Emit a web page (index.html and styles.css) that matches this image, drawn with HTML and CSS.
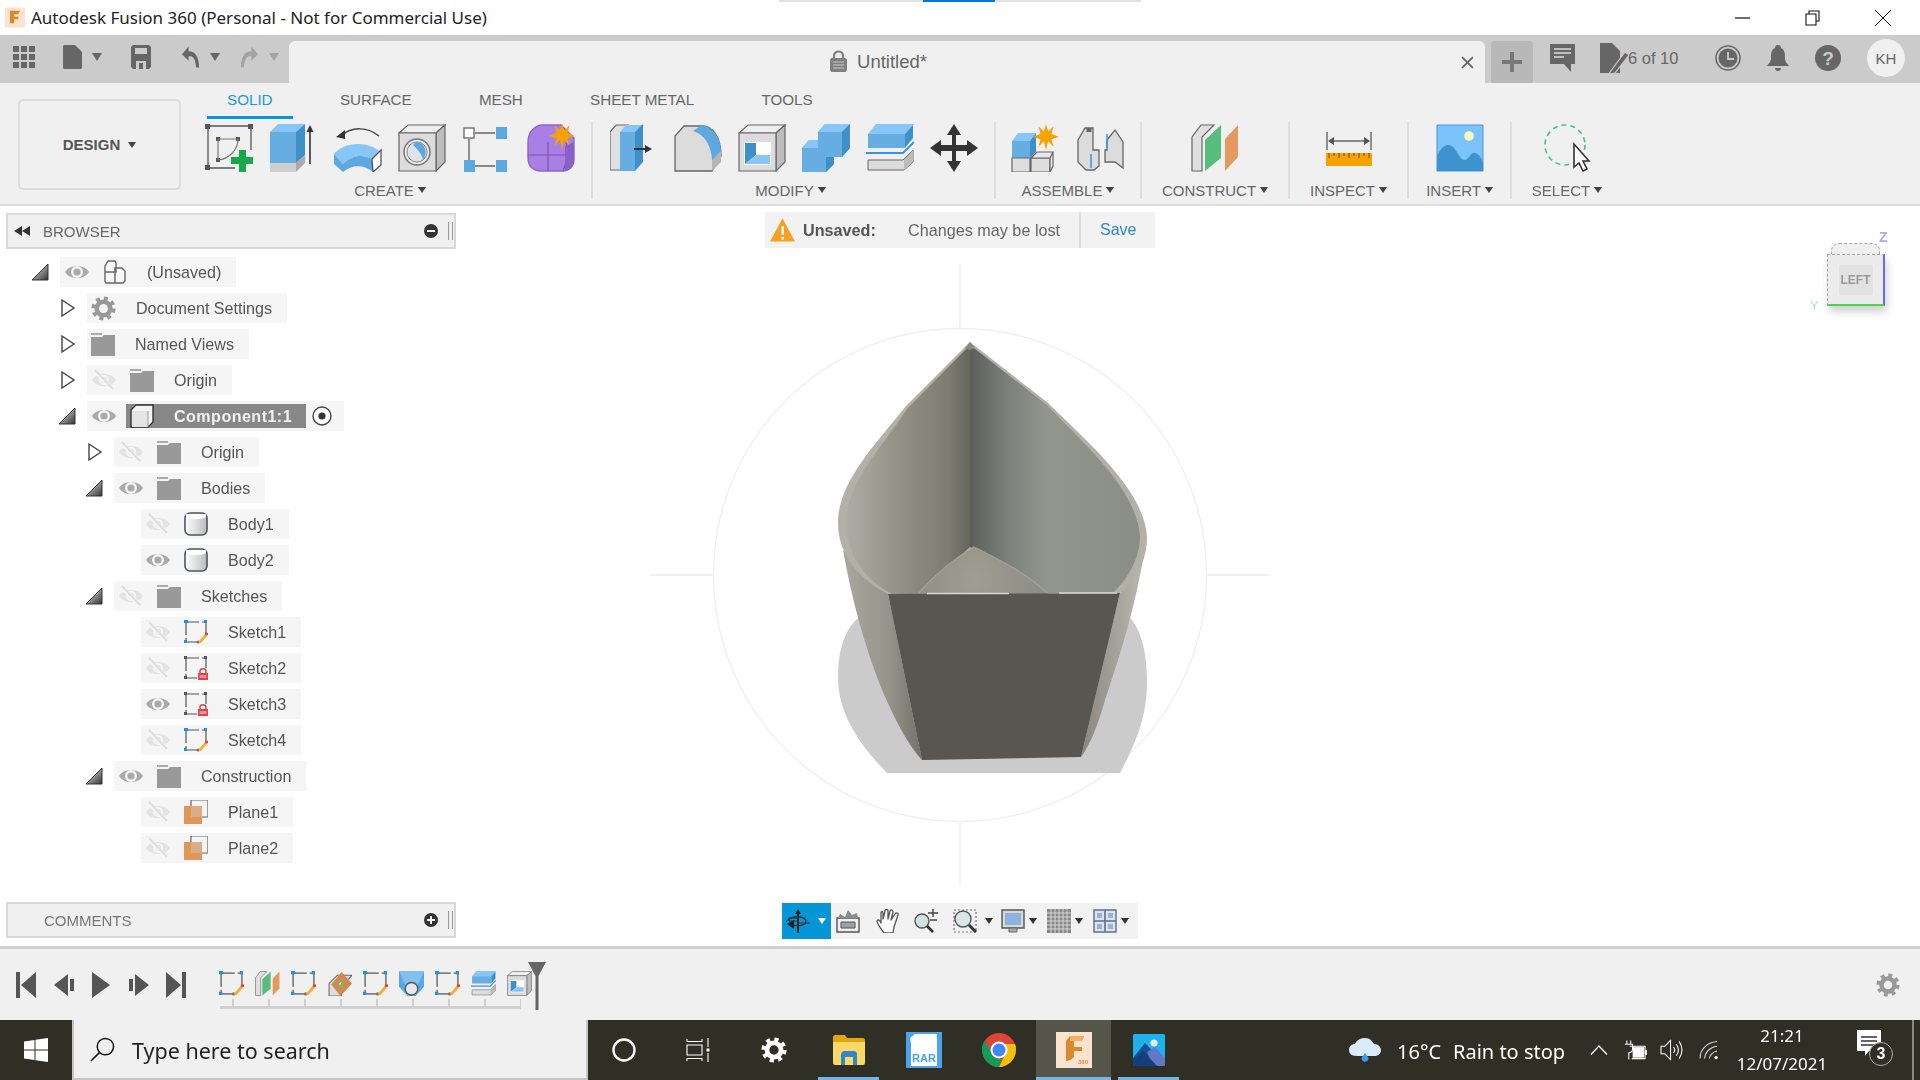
FILE: index.html
```html
<!DOCTYPE html>
<html lang="en">
<head>
<meta charset="utf-8">
<title>Autodesk Fusion 360</title>
<link rel="stylesheet" href="styles.css">
</head>
<body>
<svg class="defs" width="0" height="0" aria-hidden="true">
  <defs>
    <linearGradient id="gTri" x1="0" y1="0" x2="1" y2="1"><stop offset="0" stop-color="#f4f4f4"/><stop offset="1" stop-color="#333"/></linearGradient>
    <linearGradient id="gBody" x1="0" y1="0" x2="1" y2="0"><stop offset="0" stop-color="#fff"/><stop offset="1" stop-color="#bbb"/></linearGradient>
    <linearGradient id="wallL" x1="848" y1="0" x2="970" y2="0" gradientUnits="userSpaceOnUse"><stop offset="0" stop-color="#adaca4"/><stop offset=".45" stop-color="#918f83"/><stop offset=".82" stop-color="#7f7d72"/><stop offset="1" stop-color="#66655c"/></linearGradient>
    <linearGradient id="wallR" x1="970" y1="0" x2="1140" y2="0" gradientUnits="userSpaceOnUse"><stop offset="0" stop-color="#5b5f5a"/><stop offset=".22" stop-color="#7b807a"/><stop offset=".45" stop-color="#92968e"/><stop offset="1" stop-color="#8b8e85"/></linearGradient>
    <linearGradient id="sideL" x1="843" y1="0" x2="920" y2="0" gradientUnits="userSpaceOnUse"><stop offset="0" stop-color="#a9a89e"/><stop offset=".6" stop-color="#96948a"/><stop offset="1" stop-color="#75736a"/></linearGradient>
    <linearGradient id="sideR" x1="1085" y1="0" x2="1142" y2="0" gradientUnits="userSpaceOnUse"><stop offset="0" stop-color="#8c8a80"/><stop offset="1" stop-color="#bab8ae"/></linearGradient>
    <radialGradient id="floorG" cx="974" cy="580" r="60" gradientUnits="userSpaceOnUse"><stop offset="0" stop-color="#a09e92"/><stop offset="1" stop-color="#8e8f86"/></radialGradient>
    <symbol id="s-gear" viewBox="0 0 24 24"><circle cx="12" cy="12" r="6.5" fill="none" stroke="currentColor" stroke-width="4.4"/><circle cx="12" cy="12" r="9.8" fill="none" stroke="currentColor" stroke-width="3.6" stroke-dasharray="3.85 3.85"/></symbol>
    <symbol id="s-eye" viewBox="0 0 24 24"><path d="M0 12C5 4 19 4 24 12C19 20 5 20 0 12Z" fill="currentColor"/><circle cx="12" cy="12" r="6" fill="#f5f5f5"/><circle cx="12" cy="12" r="3.6" fill="currentColor"/></symbol>
    <symbol id="s-off" viewBox="0 0 24 24"><path d="M0 12C5 4 19 4 24 12C19 20 5 20 0 12Z" fill="#e3e3e3"/><circle cx="12" cy="12" r="5" fill="#f5f5f5"/><circle cx="12" cy="12" r="3" fill="#e3e3e3"/><path d="M3 3L21 22" stroke="#f5f5f5" stroke-width="4"/><path d="M3 2L21 21" stroke="#dedede" stroke-width="2"/></symbol>
    <symbol id="s-folder" viewBox="0 0 24 24"><path d="M0 1h11v2H0z" fill="#aaa"/><path d="M0 5h11l2-2h11v21H0z" fill="#999"/></symbol>
    <symbol id="s-doc-cubes" viewBox="0 0 24 24"><path d="M2 6l3-5h7l1 2v9h-11z M2 12h10v11H3l-1-2z M12 12V8h7l3 3v10l-2 2h-8z" fill="#f8f8f8" stroke="#666" stroke-width="1.4"/></symbol>
    <symbol id="s-cube" viewBox="0 0 24 24"><path d="M1 6l5-5h17v17l-5 5H1z" fill="#f4f4f4" stroke="#333" stroke-width="1.4"/><path d="M2 7h16v16H2z" fill="#e4e4e4"/><path d="M18 7V23" stroke="#999"/></symbol>
    <symbol id="s-body" viewBox="0 0 24 24"><rect x="1" y="1" width="22" height="22" rx="5" fill="url(#gBody)" stroke="#4e5560" stroke-width="1.6"/><path d="M2 5C7 8 17 8 22 5V2H2z" fill="#fff"/></symbol>
    <symbol id="s-skpen" viewBox="0 0 24 24"><path d="M2 2H22M2 2V22M2 22H14M22 2V13" fill="none" stroke="#555" stroke-width="1.2" stroke-dasharray="13 3"/><path d="M0 0h4v3H0zM20 0h3v3h-3zM0 20h3v3H0z" fill="#1e90e8"/><circle cx="14" cy="22" r="1.6" fill="#777"/><path d="M15 21l6-7 2 2-6 7h-2z" fill="#f0b030"/><circle cx="22.5" cy="14" r="1.6" fill="#e34040"/></symbol>
    <symbol id="s-sklock" viewBox="0 0 24 24"><path d="M2 2H22M2 2V22M2 22H13M22 2V12" fill="none" stroke="#555" stroke-width="1.2" stroke-dasharray="13 3"/><path d="M0 0h3v3H0zM20 0h3v3h-3zM0 20h3v3H0z" fill="#555"/><path d="M14 17h10v7H14z" fill="#d84848"/><path d="M16 17v-2c0-3 6-3 6 0v2" fill="none" stroke="#d84848" stroke-width="1.5"/><path d="M15.5 19h7v3h-7z" fill="#e59090"/></symbol>
    <symbol id="s-plane" viewBox="0 0 24 24"><path d="M7 6V0h17v17h-6" fill="none" stroke="#666" stroke-width="1.2"/><path d="M0 6h18v18H0z" fill="#e09656"/><path d="M7 6h11v11H7z" fill="#d9ac8a"/></symbol>
    <symbol id="s-sketchnew" viewBox="0 0 48 48"><path d="M3 2H46M3 2V44M3 44H30M46 2V26" fill="none" stroke="#555" stroke-width="1.3"/><path d="M0 0h5v5H0zM43 0h5v5h-5zM0 41h5v5H0zM11 13h4v4h-4zM31 13h4v4h-4zM11 34h4v4h-4z" fill="#555"/><path d="M13 15H33M13 15V36M33 15C33 26 24 35 13 36" fill="none" stroke="#777" stroke-width="1.2"/><path d="M34 32h7v7h8v7h-8v8h-7v-8h-8v-7h8z" fill="#17a849" transform="translate(0 -6)"/></symbol>
    <symbol id="s-extrude" viewBox="0 0 48 48"><path d="M1 8L9 0H36L27 8Z" fill="#88c6f9"/><path d="M1 8H27V39H1Z" fill="#66ade2"/><path d="M27 8L36 0V31L27 39Z" fill="#3f8fc8"/><path d="M1 39H27V48H1Z" fill="#cfcfcf"/><path d="M27 39L36 31V39L27 48Z" fill="#aaa"/><path d="M41 40V6" stroke="#333" stroke-width="1.6"/><path d="M37.5 8L41 1L44.5 8Z" fill="#333"/></symbol>
    <symbol id="s-sweep" viewBox="0 0 48 48"><path d="M7 12C18 2 34 3 45 12" fill="none" stroke="#444" stroke-width="1.5"/><path d="M2 13L11 6L11 15Z" fill="#333"/><path d="M0 30C10 18 32 16 47 28L38 35C28 30 18 31 9 40Z" fill="#88c6f9"/><path d="M0 30L9 40C18 31 28 30 38 35L39 48C28 40 18 41 9 48L0 40Z" fill="#5ea8e0"/><path d="M38 35L47 26V41L39 48Z" fill="#fff" stroke="#555" stroke-width="1.3"/></symbol>
    <symbol id="s-hole" viewBox="0 0 48 48"><path d="M1 9L10 1H47L38 9Z" fill="#efefef" stroke="#666" stroke-width="1.2"/><path d="M38 9L47 1V38L38 47Z" fill="#bdbdbd" stroke="#666" stroke-width="1.2"/><path d="M1 9H38V47H1Z" fill="#dcdcdc" stroke="#666" stroke-width="1.2"/><circle cx="19" cy="28" r="13" fill="#e8e8e8" stroke="#777" stroke-width="1.5"/><circle cx="19" cy="28" r="10" fill="#dfe4e8" stroke="#888"/><path d="M18 18C28 18 30 30 25 36C24 30 20 26 15 21Z" fill="#5ea8e0"/></symbol>
    <symbol id="s-pattern" viewBox="2 0 48 48"><path d="M14 9H34M8 15V36M14 42H34" stroke="#666" stroke-width="1.4"/><rect x="3" y="4" width="10" height="10" fill="#fff" stroke="#666" stroke-width="1.3"/><path d="M35 3h11v12H35zM3 36h11v12H3zM35 36h11v12H35z" fill="#5ea8e0"/></symbol>
    <symbol id="s-star" viewBox="0 0 24 24"><path d="M12 0l2 7 5-5-2 7 7 3-7 2 2 7-5-5-2 8-2-8-5 5 2-7-7-2 7-3-2-7 5 5z" fill="#f6a300"/></symbol>
    <symbol id="s-form" viewBox="0 0 48 48"><path d="M1 18C1 8 8 1 16 1H34L47 14V36C47 42 42 47 36 47H14C6 47 1 42 1 34Z" fill="#a97fe6" stroke="#8d65c8" stroke-width="1.4"/><path d="M1 31H40M21 18V47M39 18C42 26 40 38 36 47" fill="none" stroke="#7a54b5" stroke-width="1.2"/><path d="M38 22V47C42 46 47 42 47 36V18Z" fill="#8a60c8"/><use href="#s-star" x="22" y="-1" width="26" height="26"/></symbol>
    <symbol id="s-press" viewBox="6 0 48 48"><path d="M5 46H13V8L18 1H6L0 8V46Z" fill="#e0e0e0" stroke="#666" stroke-width="1.2" transform="translate(6 0)"/><path d="M16 8L22 1H40L34 8Z" fill="#88c6f9"/><path d="M16 8H31V47H16Z" fill="#66ade2"/><path d="M31 8L39 0V38L31 47Z" fill="#3f8fc8"/><path d="M30 25H42" stroke="#333" stroke-width="2"/><path d="M41 21L48 25L41 29Z" fill="#333"/></symbol>
    <symbol id="s-fillet" viewBox="0 0 48 48"><path d="M1 47V12L10 2H28C38 2 47 12 47 32L38 47Z" fill="#dcdcdc" stroke="#666" stroke-width="1.3"/><path d="M19 7L28 1C38 2 47 14 47 27L38 37C38 22 30 10 19 7Z" fill="#5ea8e0"/><path d="M38 37L47 27V38L38 47Z" fill="#b5b5b5"/></symbol>
    <symbol id="s-shell" viewBox="0 0 48 48"><path d="M1 9L10 1H47L38 9Z" fill="#efefef" stroke="#666" stroke-width="1.2"/><path d="M38 9L47 1V38L38 47Z" fill="#bdbdbd" stroke="#666" stroke-width="1.2"/><path d="M1 9H38V47H1Z" fill="#dcdcdc" stroke="#666" stroke-width="1.2"/><path d="M6 18H33V41H6Z" fill="#fff"/><path d="M7 19H18V31L7 40Z" fill="#3f8fc8"/><path d="M18 31H32V40H7Z" fill="#88c6f9"/></symbol>
    <symbol id="s-combine" viewBox="0 0 48 48"><path d="M16 8L23 0H48V24L40 33H32V40L24 48H0V24L7 16H16Z" fill="#66ade2"/><path d="M16 8L23 0H48L40 8Z" fill="#88c6f9"/><path d="M0 24L7 16H16V24Z" fill="#88c6f9"/><path d="M40 8L48 0V24L40 33Z" fill="#3f8fc8"/><path d="M24 33H32V40L24 48Z" fill="#3f8fc8"/></symbol>
    <symbol id="s-split" viewBox="0 0 48 48"><path d="M2 10L10 0H48L39 10Z" fill="#88c6f9"/><path d="M2 10H39V24H2Z" fill="#66ade2"/><path d="M39 10L47 1V14L39 24Z" fill="#3f8fc8"/><path d="M0 29H37L48 18" fill="none" stroke="#3a95e0" stroke-width="2"/><path d="M2 36H37L47 26V38L38 46H2Z" fill="#dcdcdc" stroke="#666" stroke-width="1"/><path d="M38 36L47 26V38L38 46Z" fill="#bbb"/></symbol>
    <symbol id="s-move" viewBox="0 0 48 48"><path d="M24 0L31 11H26V21H37V16L48 24L37 32V27H26V37H31L24 48L17 37H22V27H11V32L0 24L11 16V21H22V11H17Z" fill="#333"/></symbol>
    <symbol id="s-newcomp" viewBox="0 0 48 48"><path d="M1 17L7 9H25L19 17Z" fill="#88c6f9"/><path d="M1 17H19V34H1Z" fill="#66ade2"/><path d="M19 17L25 9V28L19 34Z" fill="#3f8fc8"/><path d="M1 34H19V48H1ZM20 34H39V48H20Z" fill="#dedede" stroke="#666" stroke-width="1.2"/><path d="M20 34L26 28H42L39 34ZM39 34L42 28V42L39 48Z" fill="#e8e8e8" stroke="#666" stroke-width="1.2"/><use href="#s-star" x="22" y="0" width="26" height="26"/></symbol>
    <symbol id="s-joint" viewBox="0 0 48 48"><path d="M1 16L8 4H16V26H22V42L17 46H9L1 38Z" fill="#dcdcdc" stroke="#666" stroke-width="1.3"/><path d="M30 16L38 6L46 18V44L38 38H28V26H30Z" fill="#dcdcdc" stroke="#666" stroke-width="1.3"/><path d="M12 4V8" stroke="#666" stroke-width="5"/><path d="M14 30V44M30 10V24" stroke="#3a95e0" stroke-width="1.5"/></symbol>
    <symbol id="s-construct" viewBox="0 0 48 48"><path d="M1 47V13L10 1H23L11 13V47Z" fill="#e0e0e0" stroke="#666" stroke-width="1.2"/><path d="M14 47V16L30 1V34Z" fill="#58bd7b"/><path d="M34 47V15L47 1V33Z" fill="#e49a5f"/></symbol>
    <symbol id="s-rule" viewBox="0 0 48 48"><path d="M2 8V26M46 8V26M4 17H44" stroke="#666" stroke-width="1.4" fill="none"/><path d="M3 17L9 13V21ZM45 17L39 13V21Z" fill="#555"/><path d="M1 29H47V42H1Z" fill="#f6a300"/><path d="M4 29v5M9 29v3M14 29v5M19 29v3M24 29v5M29 29v3M34 29v5M39 29v3M44 29v5" stroke="#6b5300" stroke-width="1"/></symbol>
    <symbol id="s-picture" viewBox="0 0 48 48"><path d="M1 1H47V47H1Z" fill="#7cc3fb" stroke="#4795d8" stroke-width="1"/><circle cx="33" cy="12" r="4.8" fill="#fbf6bd"/><path d="M1 32C7 20 12 19 17 23C22 28 24 36 29 36C32 36 34 30 37 29C41 28 45 33 47 38V47H1Z" fill="#3e92cd"/></symbol>
    <symbol id="s-select" viewBox="0 0 48 48"><circle cx="22" cy="21" r="20" fill="none" stroke="#45c678" stroke-width="1.6" stroke-dasharray="5 4"/><path d="M32 23V46L37 42L41 50L45 48L41 40H47Z" fill="#fff" stroke="#333" stroke-width="1.6" transform="translate(-1 -3)"/></symbol>
    <symbol id="s-tlfeat" viewBox="0 0 24 24"><path d="M2 24V12L10 4H24L14 16V24Z" fill="#dedede" stroke="#666"/><path d="M14 1L24 12L13 24L4 13Z" fill="#cf8a4e"/><path d="M11 13L14 10L12 15Z" fill="#fff"/><path d="M10 12l3 3 4-5" stroke="#5ac07a" stroke-width="1.6" fill="none"/></symbol>
    <symbol id="s-tlcham" viewBox="0 0 24 24"><path d="M0 0H24V15L16 24H8L0 15Z" fill="#56a8e8"/><path d="M0 0H24L18 14H6Z" fill="#d5e8f8" opacity=".35"/><circle cx="12" cy="17" r="6" fill="#e8e8e8" stroke="#555" stroke-width="1.3"/></symbol>
    <symbol id="s-orbit" viewBox="0 0 24 24"><path d="M12 0L15 5H13V24H11V5H9Z" fill="#222"/><path d="M3 9H12V12H3ZM12 14H24M0 13C4 7 9 9 12 9" fill="none" stroke="#333" stroke-width="1"/><path d="M2 11C7 6 19 7 20 12C20 17 10 18 4 15" fill="none" stroke="#333" stroke-width="1.4"/><path d="M1 15L8 11V20Z" fill="#222"/></symbol>
    <symbol id="s-camera" viewBox="0 0 24 24"><path d="M1 9H23V23H1Z" fill="#f2f2f2" stroke="#555" stroke-width="1.4"/><path d="M2 9L4 5L9 8L12 1L16 6L21 4L22 9Z" fill="#8b8b8b"/><path d="M5 13H19V19H5Z" fill="#9aa3ad" stroke="#555"/></symbol>
    <symbol id="s-hand" viewBox="0 0 24 24"><path d="M8 24C5 20 1 14 1 12C2 10 4 11 5 14L5 4C5 2 7 2 7 4V10L9 2C9 0 12 0 12 2V10L14 2C15 0 17 1 17 3L15 11L19 5C20 3 23 4 22 6L18 18L17 24Z" fill="#fafafa" stroke="#555" stroke-width="1.3" stroke-linejoin="round"/></symbol>
    <symbol id="s-zoompm" viewBox="0 0 24 24"><circle cx="8" cy="12" r="7" fill="#cfe2e2" stroke="#555" stroke-width="1.4"/><path d="M13 17L19 23" stroke="#333" stroke-width="2.6"/><path d="M14 4H24M19 0V8M16 11H23" stroke="#444" stroke-width="1.4"/></symbol>
    <symbol id="s-zoomwin" viewBox="0 0 24 24"><path d="M1 1H23V23H1Z" fill="none" stroke="#777" stroke-width="1.2" stroke-dasharray="2 2"/><circle cx="10" cy="10" r="8" fill="#d8e8e6" stroke="#555" stroke-width="1.4"/><path d="M16 16L23 23" stroke="#333" stroke-width="3"/></symbol>
    <symbol id="s-display" viewBox="0 0 24 24"><path d="M1 1H23V19H1Z" fill="#d8d8d8" stroke="#555" stroke-width="1.4"/><path d="M4 4H20V16H4Z" fill="#8cb2e0"/><path d="M8 19H16V23H8Z" fill="#aaa" stroke="#666"/></symbol>
    <symbol id="s-grid" viewBox="0 0 24 24"><path d="M0 0H24V24H0Z" fill="#888"/><path d="M4 0V24M8 0V24M12 0V24M16 0V24M20 0V24M0 4H24M0 8H24M0 12H24M0 16H24M0 20H24" stroke="#e8e8e8" stroke-width=".8"/></symbol>
    <symbol id="s-multi" viewBox="0 0 24 24"><path d="M1 1H23V23H1Z" fill="#dbe3ee" stroke="#5f6f8a" stroke-width="1.4"/><path d="M12 1V23M1 12H23" stroke="#5f6f8a" stroke-width="1.6"/><path d="M4 4H9V9H4ZM15 4H20V9H15ZM4 15H9V20H4ZM15 15H20V20H15Z" fill="#9bb2d4"/></symbol>
  </defs>
</svg>
<div class="screen">
  <header class="titlebar">
    <span class="taskline"><span class="taskline-on"></span></span>
    <svg class="applogo" viewBox="0 0 24 24"><rect width="24" height="24" fill="#fbe3cf"/><path d="M6 4H18L16 8H11V11H16V14H11V19H6Z" fill="#d98a2e"/></svg>
    <span class="apptitle">Autodesk Fusion 360 (Personal - Not for Commercial Use)</span>
    <div class="winctl">
      <svg class="wc" viewBox="0 0 16 16"><path d="M0 8H15" stroke="#111" stroke-width="1.2"/></svg>
      <svg class="wc" viewBox="0 0 16 16"><path d="M4 4V1H14V11H11M1 4H11V15H1Z" fill="none" stroke="#111" stroke-width="1.1"/></svg>
      <svg class="wc" viewBox="0 0 16 16"><path d="M0 0L16 16M16 0L0 16" stroke="#111" stroke-width="1"/></svg>
    </div>
  </header>

  <div class="qat">
    <div class="qat-left">
      <svg class="q-grid" viewBox="0 0 22 22"><path d="M0 0h6v6H0zM8 0h6v6H8zM16 0h6v6h-6zM0 8h6v6H0zM8 8h6v6H8zM16 8h6v6h-6zM0 16h6v6H0zM8 16h6v6H8zM16 16h6v6h-6z" fill="#666"/></svg>
      <svg class="q-doc" viewBox="0 0 19 24"><path d="M1 0H12L19 7V23L18 24H1L0 23V1Z" fill="#666"/></svg>
      <i class="caret caret-q"></i>
      <svg class="q-save" viewBox="0 0 20 24"><path d="M2 0H18L20 2V22L18 24H2L0 22V2Z" fill="#666"/><path d="M4 3H16V9H4ZM5 16H15V24H5Z" fill="#cbcbcb"/><path d="M8 18H12V24H8Z" fill="#666"/></svg>
      <svg class="q-undo" viewBox="0 0 20 24"><path d="M8 1L1 9L8 16V11C13 11 15 14 16 23H19C19 12 15 6 8 6Z" fill="#666"/></svg>
      <i class="caret caret-q"></i>
      <svg class="q-redo" viewBox="0 0 20 24"><path d="M12 1L19 9L12 16V11C7 11 5 14 4 23H1C1 12 5 6 12 6Z" fill="#a4a4a4"/></svg>
      <i class="caret caret-q caret-dim"></i>
    </div>
    <div class="doctab">
      <span class="doctab-title">
        <svg class="lock" viewBox="0 0 19 22"><path d="M1 10C1 9 2 8 3 8H16C17 8 18 9 18 10V20C18 21 17 22 16 22H3C2 22 1 21 1 20Z" fill="#808080"/><path d="M5 8V6C5 0 14 0 14 6V8" fill="none" stroke="#808080" stroke-width="2.2"/><path d="M4 12H15M4 15H15M4 18H15" stroke="#c8c8c8" stroke-width="1.2"/></svg>
        <span>Untitled*</span>
      </span>
      <svg class="doctab-x" viewBox="0 0 12 12"><path d="M1 1L11 11M11 1L1 11" stroke="#666" stroke-width="1.7"/></svg>
    </div>
    <div class="newtab"><svg viewBox="0 0 20 20"><path d="M8 0h4v8h8v4h-8v8H8v-8H0V8h8z" fill="#777"/></svg></div>
    <div class="qat-right">
      <svg class="q-chat" viewBox="0 0 25 28"><path d="M0 0H25V20H21V28L14 20H0Z" fill="#666"/><path d="M4 5H21M4 9H21M4 13H14" stroke="#ddd" stroke-width="1.5"/></svg>
      <svg class="q-edit" viewBox="0 0 30 30"><path d="M0 0H12L20 8V30H0Z" fill="#666"/><path d="M10 29L25 9L29 12L15 30L9 31Z" fill="#666" stroke="#cbcbcb" stroke-width="1.2"/></svg>
      <span class="q-count">6 of 10</span>
      <svg class="q-clock" viewBox="0 0 26 26"><circle cx="13" cy="13" r="12" fill="none" stroke="#666" stroke-width="1.5"/><circle cx="13" cy="13" r="9.5" fill="#666"/><path d="M13 7V14H19" fill="none" stroke="#cbcbcb" stroke-width="1.8"/></svg>
      <svg class="q-bell" viewBox="0 0 22 26"><path d="M11 0C13 0 14 1 14 3C18 5 18 9 18 13C18 17 20 18 22 21H0C2 18 4 17 4 13C4 9 4 5 8 3C8 1 9 0 11 0ZM8 23H14C14 27 8 27 8 23Z" fill="#666"/></svg>
      <svg class="q-help" viewBox="0 0 26 26"><circle cx="13" cy="13" r="13" fill="#666"/><text x="13" y="20" class="q-help-t">?</text></svg>
      <span class="avatar">KH</span>
    </div>
  </div>

  <section class="ribbon">
    <div class="designbox">DESIGN<i class="caret caret-d"></i></div>
    <div class="ribbon-main">
      <nav class="tabs">
        <span class="tab tab-on">SOLID</span>
        <span class="tab">SURFACE</span>
        <span class="tab">MESH</span>
        <span class="tab">SHEET METAL</span>
        <span class="tab">TOOLS</span>
      </nav>
      <div class="groups">
        <div class="group g-create">
          <div class="tools t-create">
            <svg class="tool"><use href="#s-sketchnew"/></svg>
            <svg class="tool"><use href="#s-extrude"/></svg>
            <svg class="tool"><use href="#s-sweep"/></svg>
            <svg class="tool"><use href="#s-hole"/></svg>
            <svg class="tool"><use href="#s-pattern"/></svg>
            <svg class="tool"><use href="#s-form"/></svg>
          </div>
          <div class="glabel">CREATE<i class="caret"></i></div>
        </div>
        <div class="group g-modify">
          <div class="tools t-modify">
            <svg class="tool"><use href="#s-press"/></svg>
            <svg class="tool"><use href="#s-fillet"/></svg>
            <svg class="tool"><use href="#s-shell"/></svg>
            <svg class="tool"><use href="#s-combine"/></svg>
            <svg class="tool"><use href="#s-split"/></svg>
            <svg class="tool"><use href="#s-move"/></svg>
          </div>
          <div class="glabel">MODIFY<i class="caret"></i></div>
        </div>
        <div class="group g-assemble">
          <div class="tools t-assemble">
            <svg class="tool"><use href="#s-newcomp"/></svg>
            <svg class="tool"><use href="#s-joint"/></svg>
          </div>
          <div class="glabel">ASSEMBLE<i class="caret"></i></div>
        </div>
        <div class="group g-construct">
          <div class="tools"><svg class="tool"><use href="#s-construct"/></svg></div>
          <div class="glabel">CONSTRUCT<i class="caret"></i></div>
        </div>
        <div class="group g-inspect">
          <div class="tools"><svg class="tool"><use href="#s-rule"/></svg></div>
          <div class="glabel">INSPECT<i class="caret"></i></div>
        </div>
        <div class="group g-insert">
          <div class="tools"><svg class="tool"><use href="#s-picture"/></svg></div>
          <div class="glabel">INSERT<i class="caret"></i></div>
        </div>
        <div class="group g-select">
          <div class="tools"><svg class="tool"><use href="#s-select"/></svg></div>
          <div class="glabel">SELECT<i class="caret"></i></div>
        </div>
      </div>
    </div>
  </section>

  <main class="workspace">
    <svg class="model" viewBox="0 206 1920 740">
      <circle cx="960" cy="575" r="246.5" fill="none" stroke="#efefef" stroke-width="1.3"/>
      <path d="M651 575H714M1206 575H1270M960 265V328M960 823V885" stroke="#ececec" stroke-width="1.3"/>
      <path d="M838 677C838 640 850 620 870 610H1120C1140 620 1147 650 1147 683C1147 720 1132 750 1120 773L887 773C860 745 838 715 838 677Z" fill="#cbcbcb"/>
      <path d="M843 550L888 594L922 760C908 745 895 720 882 690C864 645 852 600 843 550Z" fill="url(#sideL)"/>
      <path d="M1144 555L1120 593L1081 757C1090 745 1098 725 1105 700C1122 650 1134 610 1144 555Z" fill="url(#sideR)"/>
      <path d="M970 342L1048 403C1085 440 1145 490 1147 537C1147 565 1132 583 1120 593L888 594C860 580 838 555 838 523C838 480 880 440 905 407Z" fill="#b3b1a7"/>
      <path d="M970 345V547L918 594H892C862 578 846 552 846 523C846 482 884 445 907 409Z" fill="url(#wallL)"/>
      <path d="M970 345L1047 405C1082 442 1138 490 1140 537C1140 560 1126 580 1114 592L1048 593L970 547Z" fill="url(#wallR)"/>
      <path d="M970 342L975 348L970 350L965 348Z" fill="#8a887c"/>
      <path d="M918 594C935 574 955 558 974 547C1000 560 1030 575 1048 594Z" fill="url(#floorG)"/>
      <path d="M918 594C935 574 955 558 974 547C1000 560 1030 575 1048 594" fill="none" stroke="#a4a398" stroke-width="1.2"/>
      <path d="M888 594L1120 593L1081 757L922 760Z" fill="#575650"/>
      <path d="M927 593.5H1009M1059 593H1117" stroke="#d8d8d2" stroke-width="1.4"/>
    </svg>

    <div class="unsaved">
      <svg class="warn" viewBox="0 0 26 24"><path d="M13 0L26 24H0Z" fill="#f5a01e"/><path d="M12 8H14.5V17H12ZM12 19H14.5V22H12Z" fill="#fff"/></svg>
      <b class="unsaved-b">Unsaved:</b>
      <span class="unsaved-m">Changes may be lost</span>
      <span class="unsaved-s">Save</span>
    </div>

    <div class="viewcube">
      <span class="vc-z">Z</span>
      <span class="vc-y">Y</span>
      <div class="vc-box"><span class="vc-top"></span><span class="vc-face">LEFT</span></div>
    </div>

    <div class="navbar">
      <span class="nav-on"><svg class="navi"><use href="#s-orbit"/></svg><i class="caret caret-w"></i></span>
      <svg class="navi n-cam"><use href="#s-camera"/></svg>
      <svg class="navi n-hand"><use href="#s-hand"/></svg>
      <svg class="navi n-zp"><use href="#s-zoompm"/></svg>
      <svg class="navi n-zw"><use href="#s-zoomwin"/></svg><i class="caret c-first"></i>
      <svg class="navi n-dsp"><use href="#s-display"/></svg><i class="caret"></i>
      <svg class="navi n-g"><use href="#s-grid"/></svg><i class="caret"></i>
      <svg class="navi n-g"><use href="#s-multi"/></svg><i class="caret"></i>
    </div>

    <aside class="side">
      <div class="panel-head">
        <svg class="rew" viewBox="0 0 16 10"><path d="M8 0V10L0 5ZM16 0V10L8 5Z" fill="#333"/></svg>
        <span class="panel-t">BROWSER</span>
        <svg class="pmin" viewBox="0 0 14 14"><circle cx="7" cy="7" r="7" fill="#333"/><path d="M3 6h8v2H3z" fill="#f0f0f0"/></svg>
        <span class="grip"></span>
      </div>
      <ul class="tree">
        <li class="node d0"><i class="tw tw-open"><svg viewBox="0 0 18 18"><path d="M1 17L17 1V17Z" fill="url(#gTri)" stroke="#333"/></svg></i><div class="chip"><svg class="eye"><use href="#s-eye"/></svg><svg class="ico"><use href="#s-doc-cubes"/></svg><span class="lbl">(Unsaved)</span></div></li>
        <li class="node d1"><i class="tw"><svg viewBox="0 0 18 18"><path d="M4 1L16 9L4 17Z" fill="#fff" stroke="#444" stroke-width="1.4"/></svg></i><div class="chip chip-noeye"><svg class="ico ico-gear"><use href="#s-gear"/></svg><span class="lbl">Document Settings</span></div></li>
        <li class="node d1"><i class="tw"><svg viewBox="0 0 18 18"><path d="M4 1L16 9L4 17Z" fill="#fff" stroke="#444" stroke-width="1.4"/></svg></i><div class="chip chip-noeye"><svg class="ico"><use href="#s-folder"/></svg><span class="lbl">Named Views</span></div></li>
        <li class="node d1"><i class="tw"><svg viewBox="0 0 18 18"><path d="M4 1L16 9L4 17Z" fill="#fff" stroke="#444" stroke-width="1.4"/></svg></i><div class="chip"><svg class="eye"><use href="#s-off"/></svg><svg class="ico"><use href="#s-folder"/></svg><span class="lbl">Origin</span></div></li>
        <li class="node d1"><i class="tw tw-open"><svg viewBox="0 0 18 18"><path d="M1 17L17 1V17Z" fill="url(#gTri)" stroke="#333"/></svg></i><div class="chip chip-comp"><svg class="eye"><use href="#s-eye"/></svg><div class="sel"><svg class="ico"><use href="#s-cube"/></svg><span class="lbl lbl-sel">Component1:1</span></div><svg class="target" viewBox="0 0 20 20"><circle cx="10" cy="10" r="9" fill="#fff" stroke="#444" stroke-width="1.4"/><circle cx="10" cy="10" r="3.6" fill="#333"/></svg></div></li>
        <li class="node d2"><i class="tw"><svg viewBox="0 0 18 18"><path d="M4 1L16 9L4 17Z" fill="#fff" stroke="#444" stroke-width="1.4"/></svg></i><div class="chip"><svg class="eye"><use href="#s-off"/></svg><svg class="ico"><use href="#s-folder"/></svg><span class="lbl">Origin</span></div></li>
        <li class="node d2"><i class="tw tw-open"><svg viewBox="0 0 18 18"><path d="M1 17L17 1V17Z" fill="url(#gTri)" stroke="#333"/></svg></i><div class="chip"><svg class="eye"><use href="#s-eye"/></svg><svg class="ico"><use href="#s-folder"/></svg><span class="lbl">Bodies</span></div></li>
        <li class="node d3"><i class="tw"></i><div class="chip"><svg class="eye"><use href="#s-off"/></svg><svg class="ico"><use href="#s-body"/></svg><span class="lbl">Body1</span></div></li>
        <li class="node d3"><i class="tw"></i><div class="chip"><svg class="eye"><use href="#s-eye"/></svg><svg class="ico"><use href="#s-body"/></svg><span class="lbl">Body2</span></div></li>
        <li class="node d2"><i class="tw tw-open"><svg viewBox="0 0 18 18"><path d="M1 17L17 1V17Z" fill="url(#gTri)" stroke="#333"/></svg></i><div class="chip"><svg class="eye"><use href="#s-off"/></svg><svg class="ico"><use href="#s-folder"/></svg><span class="lbl">Sketches</span></div></li>
        <li class="node d3"><i class="tw"></i><div class="chip"><svg class="eye"><use href="#s-off"/></svg><svg class="ico"><use href="#s-skpen"/></svg><span class="lbl">Sketch1</span></div></li>
        <li class="node d3"><i class="tw"></i><div class="chip"><svg class="eye"><use href="#s-off"/></svg><svg class="ico"><use href="#s-sklock"/></svg><span class="lbl">Sketch2</span></div></li>
        <li class="node d3"><i class="tw"></i><div class="chip"><svg class="eye"><use href="#s-eye"/></svg><svg class="ico"><use href="#s-sklock"/></svg><span class="lbl">Sketch3</span></div></li>
        <li class="node d3"><i class="tw"></i><div class="chip"><svg class="eye"><use href="#s-off"/></svg><svg class="ico"><use href="#s-skpen"/></svg><span class="lbl">Sketch4</span></div></li>
        <li class="node d2"><i class="tw tw-open"><svg viewBox="0 0 18 18"><path d="M1 17L17 1V17Z" fill="url(#gTri)" stroke="#333"/></svg></i><div class="chip"><svg class="eye"><use href="#s-eye"/></svg><svg class="ico"><use href="#s-folder"/></svg><span class="lbl">Construction</span></div></li>
        <li class="node d3"><i class="tw"></i><div class="chip"><svg class="eye"><use href="#s-off"/></svg><svg class="ico"><use href="#s-plane"/></svg><span class="lbl">Plane1</span></div></li>
        <li class="node d3"><i class="tw"></i><div class="chip"><svg class="eye"><use href="#s-off"/></svg><svg class="ico"><use href="#s-plane"/></svg><span class="lbl">Plane2</span></div></li>
      </ul>
      <div class="panel-head panel-foot">
        <span class="panel-t panel-c">COMMENTS</span>
        <svg class="pmin" viewBox="0 0 14 14"><circle cx="7" cy="7" r="7" fill="#333"/><path d="M3 6h8v2H3zM6 3h2v8H6z" fill="#f0f0f0"/></svg>
        <span class="grip"></span>
      </div>
    </aside>
  </main>

  <section class="timeline">
    <div class="controls">
      <svg class="ctl" viewBox="0 0 20 26"><path d="M0 0H4V26H0ZM20 0V26L5 13Z" fill="#555"/></svg>
      <svg class="ctl" viewBox="0 0 20 26"><path d="M14 2V24L0 13ZM16 7H20V19H16Z" fill="#555"/></svg>
      <svg class="ctl" viewBox="0 0 20 26"><path d="M1 0L19 13L1 26Z" fill="#555"/></svg>
      <svg class="ctl" viewBox="0 0 20 26"><path d="M6 2V24L20 13ZM0 7H4V19H0Z" fill="#555"/></svg>
      <svg class="ctl" viewBox="0 0 20 26"><path d="M16 0H20V26H16ZM0 0V26L15 13Z" fill="#555"/></svg>
    </div>
    <div class="track">
      <div class="feats">
        <svg class="feat"><use href="#s-skpen"/></svg>
        <svg class="feat"><use href="#s-construct"/></svg>
        <svg class="feat"><use href="#s-skpen"/></svg>
        <svg class="feat"><use href="#s-tlfeat"/></svg>
        <svg class="feat"><use href="#s-skpen"/></svg>
        <svg class="feat"><use href="#s-tlcham"/></svg>
        <svg class="feat"><use href="#s-skpen"/></svg>
        <svg class="feat"><use href="#s-split"/></svg>
        <svg class="feat"><use href="#s-shell"/></svg>
      </div>
      <div class="ruler"></div>
      <svg class="playhead" viewBox="0 0 18 48"><path d="M0 0H18L10.5 14V48H7.5V14Z" fill="#666"/></svg>
    </div>
    <svg class="tl-gear"><use href="#s-gear"/></svg>
  </section>

  <footer class="taskbar">
    <div class="startbtn"><svg viewBox="0 0 24 24"><path d="M0 3.5L10.5 2V11.5H0ZM11.5 1.8L24 0V11.5H11.5ZM0 12.5H10.5V22L0 20.5ZM11.5 12.5H24V24L11.5 22.2Z" fill="#fff"/></svg></div>
    <div class="search">
      <svg class="search-i" viewBox="0 0 26 26"><circle cx="16" cy="10" r="8.5" fill="none" stroke="#111" stroke-width="1.5"/><path d="M10 16L1 25" stroke="#111" stroke-width="1.6"/></svg>
      <span class="search-t">Type here to search</span>
    </div>
    <div class="apps">
      <span class="slot"><svg class="tb24" viewBox="0 0 24 24"><circle cx="12" cy="12" r="10.5" fill="none" stroke="#fff" stroke-width="2.4"/></svg></span>
      <span class="slot"><svg class="tb24" viewBox="0 0 24 24"><path d="M0 1V3.5H15V1M0 23V20.5H15V23M0 7H15V17H0ZM21 0V9M21 15V24" fill="none" stroke="#fff" stroke-width="1.1"/><path d="M19.5 10.5H22.5V13.5H19.5Z" fill="#fff"/></svg></span>
      <span class="slot"><svg class="tb26 wh"><use href="#s-gear"/></svg></span>
      <span class="slot slot-run"><svg class="tbx" viewBox="0 0 32 30"><path d="M0 2C0 1 1 0 2 0H12L14 3H30C31 3 32 4 32 5V8H0Z" fill="#e2a60d"/><path d="M0 7H32V28C32 29 31 30 30 30H2C1 30 0 29 0 28Z" fill="#fdd867"/><path d="M8 30V20C8 17 10 16 11 16H21C23 16 24 17 24 20V30H20V22H12V30Z" fill="#2f86c8"/></svg></span>
      <span class="slot"><svg class="tb36" viewBox="0 0 36 36"><path d="M0 0H36V36H0Z" fill="#4ba3ee"/><path d="M4 6L9 2H31V34H5V11Z" fill="#fff"/><text x="18" y="30" class="rar">RAR</text></svg></span>
      <span class="slot"><svg class="tb34" viewBox="0 0 34 34"><circle cx="17" cy="17" r="17" fill="#db4437"/><path d="M17 34C8 34 1 27 0 17C0 13 1 10 3 8L12 24C14 26 17 27 20 26Z" fill="#0f9d58"/><path d="M17 34C26 34 34 26 34 17C34 15 34 13 33 11H17L23 22Z" fill="#f4c20d"/><circle cx="17" cy="17" r="8.5" fill="#fff"/><circle cx="17" cy="17" r="6.5" fill="#4285f4"/></svg></span>
      <span class="slot slot-run slot-active"><svg class="tb36" viewBox="0 0 36 36"><path d="M0 0H36V36H0Z" fill="#fbe3cf"/><path d="M10 9L14 4H28L26 9H18V15H26V19H18V25C15 28 12 29 10 29Z" fill="#d98a2e"/><path d="M14 4H28L26 9H14Z" fill="#efb263"/><text x="27" y="32" class="f360">360</text></svg></span>
      <span class="slot slot-run"><svg class="tb32" viewBox="0 0 32 32"><path d="M1 0H31L32 1V31L31 32H1L0 31V1Z" fill="#1fb0ee"/><circle cx="21" cy="9" r="3.6" fill="#e8f4fa"/><path d="M0 24L12 9L24 22V32H1L0 31Z" fill="#1c4f92"/><path d="M14 18L22 13L32 24V31L31 32H20Z" fill="#6178c8"/><path d="M0 26L10 17L24 32H1L0 31Z" fill="#143e7c"/></svg></span>
    </div>
    <div class="tray">
      <svg class="cloud" viewBox="0 0 32 24"><path d="M8 18C2 18 0 15 0 12C0 8 3 6 6 6C8 1 13 0 16 0C21 0 23 3 25 6C29 6 32 9 32 12C32 16 29 18 25 18Z" fill="#d9ecfb"/><path d="M16 15L19.5 20C19.5 25 12.5 25 12.5 20Z" fill="#3e9ae6"/></svg>
      <span class="temp">16°C</span>
      <span class="wx">Rain to stop</span>
      <svg class="chev" viewBox="0 0 18 10"><path d="M1 9.5L9 1L17 9.5" fill="none" stroke="#fff" stroke-width="1.2"/></svg>
      <svg class="batt" viewBox="0 0 24 20"><path d="M3 0V4M7 0V4M1 4H9V9C9 12 6 13 5 13V20" fill="none" stroke="#fff" stroke-width="1.1"/><path d="M6 6H22V19H8" fill="none" stroke="#fff" stroke-width="1.1"/><path d="M9 7H21V18H9Z" fill="#fff"/><path d="M22 10H24V15H22Z" fill="#fff"/></svg>
      <svg class="spk" viewBox="0 0 22 22"><path d="M0 7H4L10 1V21L4 15H0Z" fill="none" stroke="#fff" stroke-width="1.1"/><path d="M13 8C15 10 15 12 13 14M16 5C19 9 19 13 16 17M19 2C23 8 23 14 19 20" fill="none" stroke="#fff" stroke-width="1.1"/></svg>
      <svg class="wifi" viewBox="0 0 20 20"><path d="M1 19C1 10 8 2 19 1M6 19C6 13 11 7 19 6M11 19C11 16 14 12 19 11" fill="none" stroke="#ddd" stroke-width="1.1"/><circle cx="18" cy="18" r="1.8" fill="#fff"/></svg>
      <div class="clock"><span>21:21</span><span>12/07/2021</span></div>
      <div class="notif">
        <svg class="notif-i" viewBox="0 0 24 24"><path d="M0 0H24V21H12L8 26V21H0Z" fill="#fff"/><path d="M4 7H20M4 11H20M4 15H20" stroke="#333" stroke-width="1.3"/></svg>
        <span class="badge">3</span>
      </div>
      <span class="edge"></span>
    </div>
  </footer>
</div>
</body>
</html>
```

FILE: styles.css
```css
* { box-sizing: border-box; }
html, body { margin: 0; padding: 0; height: 100%; overflow: hidden; background: #fff; }
.defs { position: absolute; }
i { display: block; font-style: normal; }
svg { display: block; flex: none; overflow: visible; }
ul { list-style: none; margin: 0; padding: 0; }

.screen {
  width: 1920px; height: 1080px;
  display: flex; flex-direction: column;
  font-family: "Liberation Sans", Arial, sans-serif;
  color: #555;
  filter: blur(0.45px);
}

.caret { width: 0; height: 0; border-left: 4.5px solid transparent; border-right: 4.5px solid transparent; border-top: 6px solid #444; margin-left: 4px; flex: none; }
.caret-q { margin-left: 10px; border-left-width: 5px; border-right-width: 5px; border-top-width: 8px; border-top-color: #666; }
.caret-dim { border-top-color: #a4a4a4; }
.caret-w { border-top-color: #fff; margin-left: 8px; }
.caret-d { margin-left: 8px; }

/* title bar */
.titlebar { height: 35px; display: flex; align-items: center; background: #fff; flex: none; position: relative; }
.taskline { position: absolute; left: 779px; top: 0; width: 362px; height: 2px; background: #e2e2e2; }
.taskline-on { position: absolute; left: 144px; top: 0; width: 72px; height: 2px; background: #0078d7; }
.applogo { width: 20px; height: 21px; margin-left: 5px; }
.apptitle { margin-left: 6px; font-family: "Noto Sans", sans-serif; font-size: 17px; color: #222; white-space: nowrap; }
.winctl { margin-left: auto; display: flex; align-items: center; gap: 54px; margin-right: 29px; }
.wc { width: 16px; height: 16px; }

/* quick access toolbar */
.qat { height: 48px; background: #cbcbcb; display: flex; flex: none; }
.qat-left { width: 289px; display: flex; align-items: center; padding-left: 13px; padding-bottom: 4px; flex: none; }
.q-grid { width: 22px; height: 22px; }
.q-doc { width: 19px; height: 24px; margin-left: 28px; }
.q-save { width: 20px; height: 24px; margin-left: 29px; }
.q-undo { width: 19px; height: 24px; margin-left: 30px; }
.q-redo { width: 19px; height: 24px; margin-left: 20px; }
.qat-left .caret-q { margin-left: 10px; }
.doctab { width: 1196px; margin-top: 6px; background: #f0f0f0; border-radius: 6px 6px 0 0; display: flex; align-items: center; justify-content: center; position: relative; padding-right: 18px; }
.doctab-title { display: flex; align-items: center; gap: 9px; font-size: 18.5px; color: #666; }
.lock { width: 19px; height: 22px; margin-top: -2px; }
.doctab-x { position: absolute; right: 11px; top: 15px; width: 13px; height: 13px; }
.newtab { width: 42px; margin: 6px 0 0 6px; background: #b8b8b8; border-radius: 4px 4px 0 0; display: flex; align-items: center; justify-content: center; }
.newtab svg { width: 20px; height: 20px; }
.qat-right { display: flex; align-items: center; padding: 0 0 2px 17px; flex: 1; }
.q-chat { width: 25px; height: 30px; }
.q-edit { width: 30px; height: 30px; margin-left: 25px; }
.q-count { font-size: 16.5px; color: #666; margin-left: -2px; width: 52px; white-space: nowrap; }
.q-clock { width: 26px; height: 26px; margin-left: 35px; }
.q-bell { width: 22px; height: 28px; margin-left: 26px; }
.q-help { width: 26px; height: 26px; margin-left: 26px; }
.q-help-t { font: bold 19px "Liberation Sans", sans-serif; fill: #cbcbcb; text-anchor: middle; }
.avatar { width: 38px; height: 38px; border-radius: 50%; background: #f0f0f0; color: #666; font-size: 15px; display: flex; align-items: center; justify-content: center; margin-left: 26px; }

/* ribbon */
.ribbon { height: 123px; background: #f0f0f0; border-bottom: 2px solid #dedede; display: flex; flex: none; }
.designbox { width: 163px; height: 91px; margin: 16px 0 0 18px; border: 2px solid #dcdcdc; border-radius: 5px; display: flex; align-items: center; justify-content: center; font-size: 15px; font-weight: bold; color: #555; flex: none; }
.ribbon-main { margin-left: 8px; display: flex; flex-direction: column; flex: none; }
.tabs { display: flex; gap: 27.3px; height: 36px; padding: 5px 0 0 18px; }
.tab { height: 31px; padding: 1px 20px 0; font-size: 15.2px; line-height: 22px; color: #666; border-bottom: 3px solid transparent; white-space: nowrap; }
.tab-on { color: #1a9ad9; border-bottom-color: #0696d7; }
.groups { display: flex; height: 77px; margin-top: 3px; }
.group { display: flex; flex-direction: column; align-items: center; border-right: 2px solid #dedede; padding-top: 2px; flex: none; }
.g-create { width: 404px; }
.g-modify { width: 403px; }
.g-modify .glabel { margin-right: 6px; }
.g-assemble { width: 146px; }
.g-construct { width: 148px; }
.g-inspect { width: 119px; }
.g-insert { width: 103px; }
.g-select { width: 110px; border-right: 0; }
.tools { display: flex; height: 48px; }
.t-create { gap: 16.5px; }
.t-modify { gap: 16px; }
.t-assemble { gap: 18px; }
.tool { width: 48px; height: 48px; }
.glabel { display: flex; align-items: center; font-size: 15px; height: 20px; margin-top: 9px; color: #666; white-space: nowrap; }

/* workspace */
.workspace { flex: 1; position: relative; background: #fff; display: flex; min-height: 0; }
.model { position: absolute; left: 0; top: 0; width: 1920px; height: 740px; }
.side { position: relative; width: 450px; margin-left: 6px; padding: 7px 0 8px; display: flex; flex-direction: column; justify-content: space-between; }
.panel-head { height: 36px; background: #f0f0f0; border: 2px solid #d8d8d8; display: flex; align-items: center; padding: 0 1px 0 6px; flex: none; }
.rew { width: 16px; height: 10px; }
.panel-t { margin-left: 13px; font-size: 15px; color: #666; }
.panel-c { margin-left: 30px; color: #777; }
.pmin { width: 14px; height: 14px; margin-left: auto; }
.grip { width: 5px; height: 18px; margin-left: 10px; border: 1px solid #999; border-width: 0 1px; }
.panel-foot { margin-top: auto; }
.tree { margin: 8px 0 0; display: flex; flex-direction: column; gap: 6px; }
.node { display: flex; align-items: center; height: 30px; }
.d0 { padding-left: 25px; }
.d1 { padding-left: 52px; }
.d2 { padding-left: 79px; }
.d3 { padding-left: 106px; }
.tw { width: 18px; height: 18px; margin-right: 11px; flex: none; }
.tw svg { width: 18px; height: 18px; }
.chip { height: 30px; display: flex; align-items: center; background: #f5f5f5; padding: 0 15px 0 5px; }
.chip-noeye { padding-left: 4px; }
.chip-comp { padding-right: 12px; }
.eye { width: 24px; height: 24px; color: #aaa; }
.ico { width: 24px; height: 24px; margin-left: 14px; }
.chip-noeye .ico { margin-left: 0; }
.ico-gear { color: #999; width: 25px; height: 25px; }
.lbl { margin-left: 20px; font-size: 16.1px; color: #555; white-space: nowrap; }
.sel { height: 24px; background: #888; margin-left: 10px; padding: 0 14px 0 4px; display: flex; align-items: center; }
.sel .ico { margin-left: 0; }
.lbl-sel { color: #f2f2f2; font-weight: bold; letter-spacing: .45px; }
.target { width: 20px; height: 20px; margin-left: 6px; }

/* overlays on canvas */
.unsaved { position: absolute; left: 765px; top: 6px; width: 390px; height: 36px; background: #f2f2f2; display: flex; align-items: center; padding-left: 5px; }
.warn { width: 25px; height: 24px; }
.unsaved-b { margin-left: 8px; font-size: 16.2px; color: #555; width: 105px; }
.unsaved-m { font-size: 16.2px; color: #666; width: 171px; white-space: nowrap; }
.unsaved-s { font-size: 16px; color: #2a8ac9; border-left: 2px solid #dcdcdc; height: 36px; line-height: 36px; padding-left: 19px; }

.viewcube { position: absolute; left: 1807px; top: 29px; width: 90px; height: 84px; }
.vc-z { position: absolute; left: 72px; top: -6px; font-size: 14px; font-weight: bold; color: #a9a9f8; }
.vc-y { position: absolute; left: 3px; top: 63px; font-size: 13px; color: #a6f3ae; }
.vc-box { position: absolute; left: 20px; top: 19px; width: 58px; height: 52px; background: #ececec; border: 1.5px dashed #a8a8a8; border-right: 2px solid #6868f0; border-bottom: 2.5px solid #4ad84a; display: flex; align-items: center; justify-content: center; box-shadow: 2px 6px 8px rgba(0,0,0,.18); }
.vc-top { position: absolute; left: 3px; right: 3px; top: -12px; height: 11px; background: #efefef; border: 1.5px dashed #a8a8a8; border-bottom: 0; border-radius: 8px 8px 0 0; }
.vc-face { width: 34px; height: 30px; background: #e2e2e2; color: #999; font-size: 12px; font-weight: bold; display: flex; align-items: center; justify-content: center; }

.navbar { position: absolute; left: 782px; top: 697px; width: 356px; height: 36px; background: #f2f2f2; display: flex; align-items: center; }
.nav-on { width: 49px; height: 36px; background: #0696d7; display: flex; align-items: center; padding-left: 4px; flex: none; }
.navi { width: 24px; height: 24px; }
.n-cam { margin-left: 5px; }
.n-hand { margin-left: 16px; }
.n-zp { margin-left: 14px; }
.n-zw { margin-left: 15px; }
.n-dsp { margin-left: 8px; }
.n-g { margin-left: 10px; }
.navbar .caret { margin-left: 4px; border-top-color: #333; }
.navbar .c-first { margin-left: 8px; }
.navbar .nav-on .caret { margin-left: 8px; border-top-color: #fff; }

/* timeline */
.timeline { height: 74px; background: #f0f0f0; border-top: 3px solid #cfcfcf; display: flex; align-items: flex-start; flex: none; position: relative; }
.controls { display: flex; gap: 17.5px; padding: 23px 0 0 16px; width: 219px; flex: none; }
.ctl { width: 20px; height: 26px; }
.track { width: 312px; position: relative; padding-top: 22px; flex: none; }
.feats { display: flex; gap: 11px; }
.feat { width: 25px; height: 25px; }
.ruler { margin: 3px 0 0 1px; width: 301px; height: 10px; border-bottom: 3px solid #d0d0d0;
  background: repeating-linear-gradient(90deg, transparent 0 12px, #d0d0d0 12px 14px, transparent 14px 36px); }
.playhead { position: absolute; left: 309px; top: 13px; width: 18px; height: 48px; }
.tl-gear { width: 24px; height: 24px; color: #999; margin-left: auto; margin-right: 20px; margin-top: 24px; }

/* taskbar */
.taskbar { height: 60px; background: #2f2f25; display: flex; align-items: stretch; flex: none; }
.startbtn { width: 72px; display: flex; align-items: center; justify-content: center; }
.startbtn svg { width: 24px; height: 24px; }
.search { width: 516px; background: #f0f0f0; border: 2px solid #c6c6c6; border-top-width: 0; display: flex; align-items: center; padding-left: 16px; }
.search-i { width: 25px; height: 25px; }
.search-t { margin-left: 17px; padding-top: 3px; font-family: "Noto Sans", sans-serif; font-size: 21.5px; color: #222; white-space: nowrap; }
.apps { display: flex; margin-left: -2px; }
.slot { width: 75px; display: flex; align-items: center; justify-content: center; position: relative; }
.slot-run::after { content: ""; position: absolute; left: 7px; right: 7px; bottom: 0; height: 3px; background: #72b6e8; }
.slot-active { background: #55554a; }
.slot-active::after { left: 0; right: 0; }
.tb24 { width: 24px; height: 24px; }
.tb26 { width: 26px; height: 26px; }
.wh { color: #fff; }
.tbx { width: 32px; height: 30px; }
.tb36 { width: 36px; height: 36px; }
.tb34 { width: 34px; height: 34px; }
.tb32 { width: 32px; height: 32px; }
.rar { font: bold 11px "Liberation Sans", sans-serif; fill: #4ba3ee; text-anchor: middle; }
.f360 { font: bold 6px "Liberation Sans", sans-serif; fill: #e89040; text-anchor: middle; }
.tray { margin-left: auto; display: flex; align-items: center; color: #fff; padding-right: 27px; position: relative; }
.cloud { width: 32px; height: 24px; }
.temp { margin-left: 16px; padding-top: 2px; font-family: "Noto Sans", sans-serif; font-size: 20px; width: 56px; white-space: nowrap; }
.wx { padding-top: 2px; font-family: "Noto Sans", sans-serif; font-size: 20px; width: 137px; white-space: nowrap; }
.chev { width: 18px; height: 10px; }
.batt { width: 23px; height: 20px; margin-left: 16px; }
.spk { width: 21px; height: 22px; margin-left: 14px; }
.wifi { width: 19px; height: 20px; margin-left: 17px; }
.clock { width: 126px; margin-left: 1px; display: flex; flex-direction: column; align-items: center; gap: 6px; font-family: "Noto Sans", sans-serif; font-size: 17px; line-height: 22px; }
.notif { position: relative; width: 36px; height: 40px; margin-left: 12px; }
.notif-i { width: 24px; height: 24px; position: absolute; left: 0; top: 0; }
.badge { position: absolute; left: 12px; top: 12px; width: 24px; height: 24px; border-radius: 50%; background: #2f2f25; border: 1px solid #aaa; color: #fff; font-size: 16px; font-weight: bold; display: flex; align-items: center; justify-content: center; }
.edge { position: absolute; right: 6px; top: 0; bottom: 0; width: 2px; background: #8a8a82; }
```
